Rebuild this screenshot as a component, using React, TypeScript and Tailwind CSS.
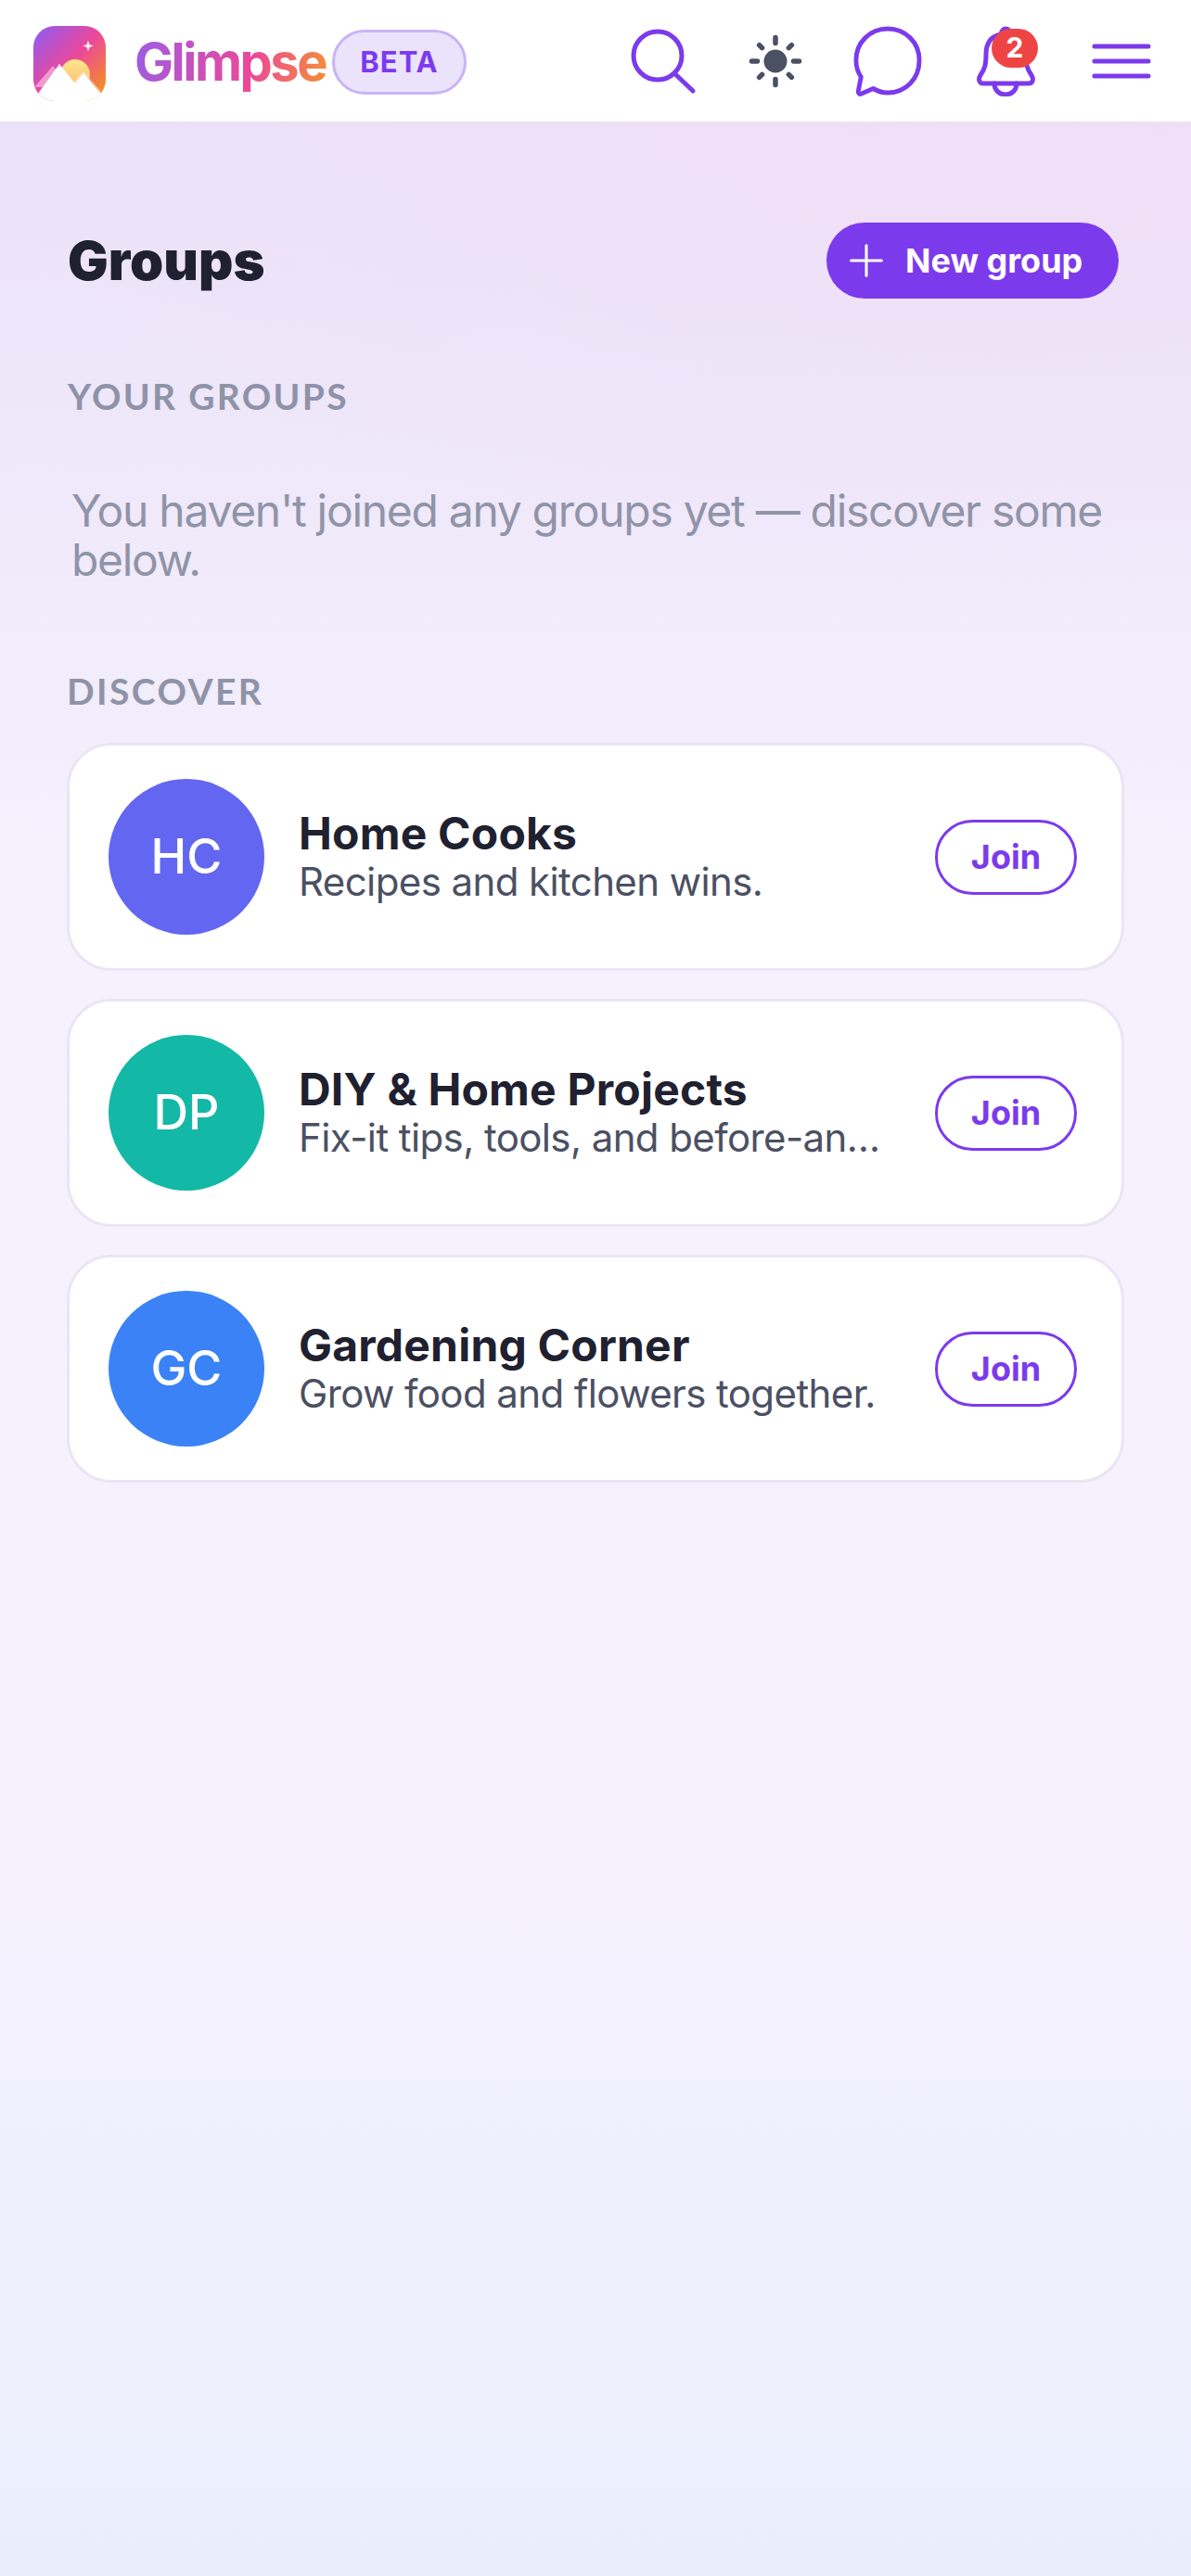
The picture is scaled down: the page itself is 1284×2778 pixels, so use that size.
import { Plus } from "lucide-react";

const groups = [
  { initials: "HC", name: "Home Cooks", blurb: "Recipes and kitchen wins.", color: "bg-[#6366f1]" },
  { initials: "DP", name: "DIY & Home Projects", blurb: "Fix-it tips, tools, and before-and-after shots.", color: "bg-[#14b8a6]" },
  { initials: "GC", name: "Gardening Corner", blurb: "Grow food and flowers together.", color: "bg-[#3b82f6]" },
];

function Logo() {
  return (
    <svg width="78" height="81" viewBox="0 0 78 81" className="mt-[5px] shrink-0">
      <defs>
        <linearGradient id="logo-sky" x1="0" y1="0" x2="1" y2="1">
          <stop offset="0" stopColor="#8b5cf6" />
          <stop offset="0.5" stopColor="#ec4899" />
          <stop offset="1" stopColor="#f59e0b" />
        </linearGradient>
        <linearGradient id="logo-sun" x1="0" y1="0" x2="0" y2="1">
          <stop offset="0" stopColor="#fde68a" />
          <stop offset="1" stopColor="#fdba74" />
        </linearGradient>
        <clipPath id="logo-clip">
          <rect width="78" height="81" rx="23" />
        </clipPath>
      </defs>
      <g clipPath="url(#logo-clip)">
        <rect width="78" height="81" fill="url(#logo-sky)" />
        <path d="M59 15.5 60.5 20 65 21.5 60.500 23 59 27.5 57.5 23 53 21.5 57.5 20Z" fill="#fff" fillOpacity="0.9" />
        <circle cx="45" cy="52" r="16" fill="url(#logo-sun)" />
        <path d="M-4 72 21 43 40 66H-4Z" fill="#fff" fillOpacity="0.45" />
        <path d="M38 66 54 49 78 76V81H38Z" fill="#fff" fillOpacity="0.4" />
        <path d="M5 73 28 41 45 62 54 51 76 77V81H5Z" fill="#fff" />
        <path d="M24 47 28 41 32 46 28 44Z" fill="#e9d5ff" />
      </g>
    </svg>
  );
}

function SearchIcon() {
  return (
    <svg width="70" height="72" viewBox="0 0 70 72" fill="none" stroke="#7c3aed" strokeWidth="5" strokeLinecap="round">
      <circle cx="29" cy="30" r="26" />
      <path d="M47 49 67 68" />
    </svg>
  );
}

function SunIcon() {
  return (
    <svg width="58" height="58" viewBox="0 0 58 58" fill="none" stroke="#4b5063" strokeWidth="5.5" strokeLinecap="round" className="ml-[57px]">
      <circle cx="29" cy="29" r="12.5" fill="#4b5063" stroke="none" />
      <path d="M29 3.500V9.500M29 48.500V54.500M3.500 29H9.500M48.500 29H54.500M11.600 11.600 14.600 14.600M43.400 43.400 46.400 46.400M11.600 46.400 14.600 43.400M43.400 14.600 46.400 11.600" />
    </svg>
  );
}

function ChatIcon() {
  return (
    <svg width="74" height="76" viewBox="0 0 76 76" preserveAspectRatio="none" fill="none" stroke="#7c3aed" strokeWidth="5" strokeLinejoin="round" className="ml-[55px]">
      <path d="M38 3C18 3 3 18 3 37 3 44 5 50 8.500 55L5.500 70C5 73 7 74 9 73L22 67.500C27 70.500 32 72 38 72 58 72 73 57 73 37 73 18 58 3 38 3Z" />
    </svg>
  );
}

function BellIcon() {
  return (
    <div className="relative ml-[58px] h-[76px] w-[66px]">
      <svg width="66" height="76" viewBox="0 0 66 76" fill="none" stroke="#7c3aed" strokeWidth="5" strokeLinejoin="round" strokeLinecap="round">
        <path d="M32 3C30 3 28 5 27 9 17 11 11 18 11 31 11 41 10 46 5 53 2 58 4 62 8 62H57C61 62 63 58 60 53 55 46 54 41 54 31 54 18 47 11 38 9 37 5 35 3 32 3Z" />
        <path d="M20 62C20 69 25 74 32 74 39 74 44 69 44 62" />
      </svg>
      <span className="absolute left-[17px] top-[3px] flex h-[42px] w-[50px] items-center justify-center rounded-full bg-[#ef4444] text-[30px] font-bold text-white">
        2
      </span>
    </div>
  );
}

function MenuIcon() {
  return (
    <svg width="64" height="38" viewBox="0 0 64 38" fill="none" stroke="#7c3aed" strokeWidth="5" strokeLinecap="round" className="ml-[59px]">
      <path d="M3 3H61M3 19H61M3 35H61" />
    </svg>
  );
}

function GroupCard(props: { initials: string; name: string; blurb: string; color: string }) {
  return (
    <div className="flex h-[246px] items-center rounded-[48px] border-[3px] border-[#e9e5f5] bg-white pl-[42px] pr-[48px]">
      <div className={`flex h-[168px] w-[168px] shrink-0 items-center justify-center rounded-full text-[52px] font-medium text-white ${props.color}`}>
        {props.initials}
      </div>
      <div className="ml-[37px] min-w-0 flex-1">
        <div className="truncate text-[48px] font-bold leading-[54px] tracking-[0.2px] text-[#1f2130]">{props.name}</div>
        <div className="truncate text-[42px] leading-[50px] tracking-[-0.6px] text-[#4b5063]">{props.blurb}</div>
      </div>
      <button className="ml-[47px] h-[81px] w-[153px] shrink-0 rounded-full border-[3px] border-[#7c3aed] text-[36px] font-bold text-[#7c3aed]">
        Join
      </button>
    </div>
  );
}

export default function App() {
  return (
    <div className="min-h-[2778px] bg-[radial-gradient(ellipse_1100px_500px_at_85%_130px,#f0dff6,transparent),linear-gradient(180deg,#ebe1f8_130px,#f5f2fd_1000px,#f6f2fd_1900px,#eaeefc_2778px)] font-['Inter',sans-serif]">
      <header className="flex h-[131px] items-center bg-white pl-[36px] pr-[43px]">
        <Logo />
        <span className="ml-[31px] mt-[3px] bg-[linear-gradient(100deg,#9b5de5,#ec4899_60%,#f59331)] bg-clip-text pr-[2px] text-[56px] font-bold tracking-[-2.5px] text-transparent">
          Glimpse
        </span>
        <span className="ml-[5px] mt-[3px] flex h-[70px] w-[145px] items-center justify-center rounded-full border-[3px] border-[#c9b3f5] bg-[#ebe3fc] text-[31px] font-bold tracking-[1px] text-[#7c3aed]">
          BETA
        </span>
        <div className="ml-auto flex items-center">
          <SearchIcon />
          <SunIcon />
          <ChatIcon />
          <BellIcon />
          <MenuIcon />
        </div>
      </header>
      <main className="pl-[72px] pr-[72px] pt-[109px]">
        <div className="flex items-center justify-between pl-[1px] pr-[6px]">
          <h1 className="text-[58px] font-black leading-[82px] text-[#1f2130]">Groups</h1>
          <button className="flex h-[82px] w-[315px] items-center gap-[14px] rounded-full bg-[#7c3aed] pl-[15px] text-[36px] font-bold text-white">
            <Plus size={56} strokeWidth={1.3} />
            New group
          </button>
        </div>
        <h2 className="mt-[81px] pl-[1px] font-['Lato',sans-serif] text-[39px] font-bold leading-[48px] tracking-[2.3px] text-[#8f93a8]">YOUR GROUPS</h2>
        <p className="mt-[73px] pl-[5px] text-[48px] leading-[53px] tracking-[-1.3px] text-[#9094a8]">
          You haven't joined any groups yet — discover some below.
        </p>
        <h2 className="mt-[91px] font-['Lato',sans-serif] text-[39px] font-bold leading-[48px] tracking-[2.4px] text-[#8f93a8]">DISCOVER</h2>
        <div className="mt-[32px] flex flex-col gap-[30px]">
          {groups.map((group) => (
            <GroupCard key={group.initials} {...group} />
          ))}
        </div>
      </main>
    </div>
  );
}
